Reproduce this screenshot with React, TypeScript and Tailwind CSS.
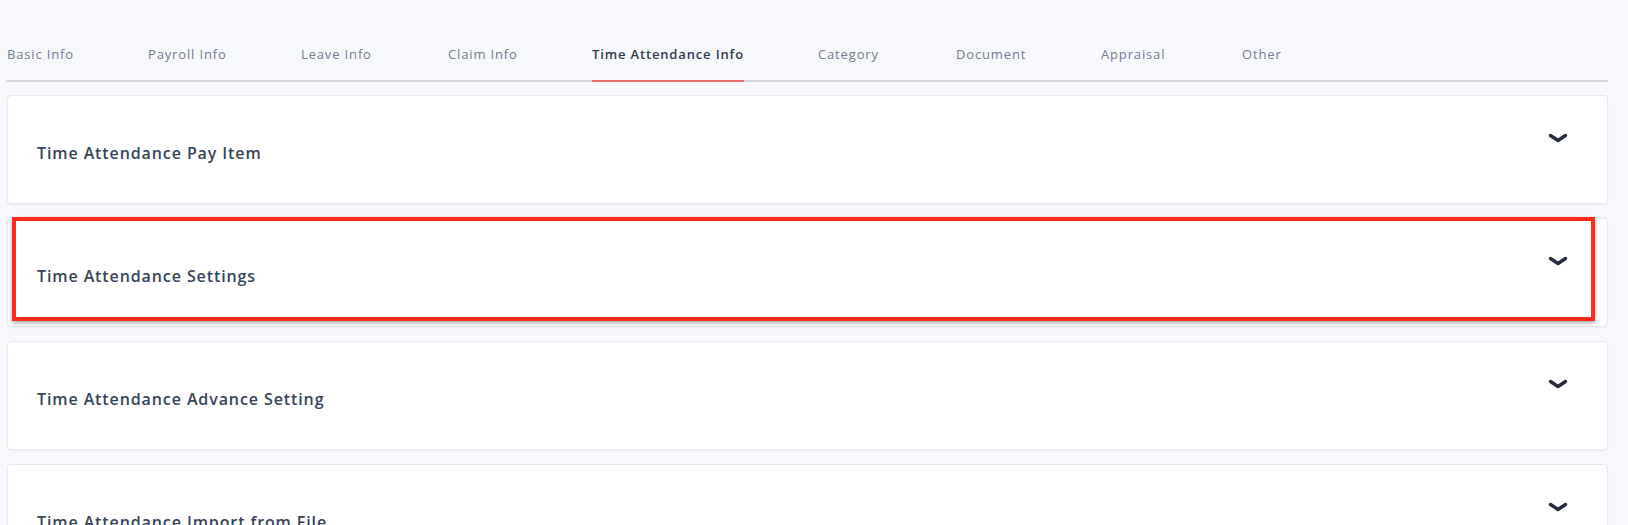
import React from "react";

const tabs = [
  { label: "Basic Info", w: "w-[141px]" },
  { label: "Payroll Info", w: "w-[153px]" },
  { label: "Leave Info", w: "w-[147px]" },
  { label: "Claim Info", w: "w-[144px]" },
  { label: "Time Attendance Info", w: "w-[226px]", active: true },
  { label: "Category", w: "w-[138px]" },
  { label: "Document", w: "w-[145px]" },
  { label: "Appraisal", w: "w-[141px]" },
  { label: "Other", w: "w-[141px]" },
];

const cards = [
  "Time Attendance Pay Item",
  "Time Attendance Settings",
  "Time Attendance Advance Setting",
  "Time Attendance Import from File",
];

function Chevron() {
  return (
    <svg width="20" height="12" viewBox="0 0 20 12" fill="none">
      <path
        d="M2.5 3.5 L10 8.5 L17.5 3.5"
        stroke="#262b3f"
        strokeWidth="3.4"
        strokeLinecap="round"
        strokeLinejoin="round"
      />
    </svg>
  );
}

export default function App() {
  return (
    <div
      className="w-[1628px] h-[525px] overflow-hidden bg-[#f7f8fc] pl-[6px] pr-[20px]"
      style={{ fontFamily: '"Open Sans", "Noto Sans", sans-serif' }}
    >
      <div className="pt-[44px] flex border-b-2 border-[#d9d9dc]">
        {tabs.map((t) => (
          <div key={t.label} className={`${t.w} shrink-0 flex pl-[1px]`}>
            <span
              className={
                t.active
                  ? "text-[13px] leading-[20px] pb-[16px] mb-[-2px] border-b-2 border-[#e96a6a] text-[#2f3a4e] font-semibold tracking-[0.85px]"
                  : "text-[13px] leading-[20px] pb-[16px] text-[#747c92] tracking-[0.85px]"
              }
            >
              {t.label}
            </span>
          </div>
        ))}
      </div>
      <div className="pt-[13px] pl-[1px] flex flex-col gap-[14px]">
        {cards.map((c, i) => (
          <div
            key={c}
            className="relative h-[109px] shrink-0 bg-white border border-[#e7e9f0] rounded-[4px] shadow-[0_1px_2px_rgba(30,40,80,0.06)] flex items-start justify-between pl-[29px] pr-[39px]"
          >
            <div className="mt-[47px] text-[16px] leading-[21px] font-semibold text-[#35445a] tracking-[0.9px]">
              {c}
            </div>
            <div className="mt-[36px]">
              <Chevron />
            </div>
            {i === 1 && (
              <div className="absolute left-[4px] top-[-2px] w-[1583px] h-[104px] border-[4.5px] border-[#ff2a1a] shadow-[0_2px_4px_rgba(0,0,0,0.35)] pointer-events-none" />
            )}
          </div>
        ))}
      </div>
    </div>
  );
}
